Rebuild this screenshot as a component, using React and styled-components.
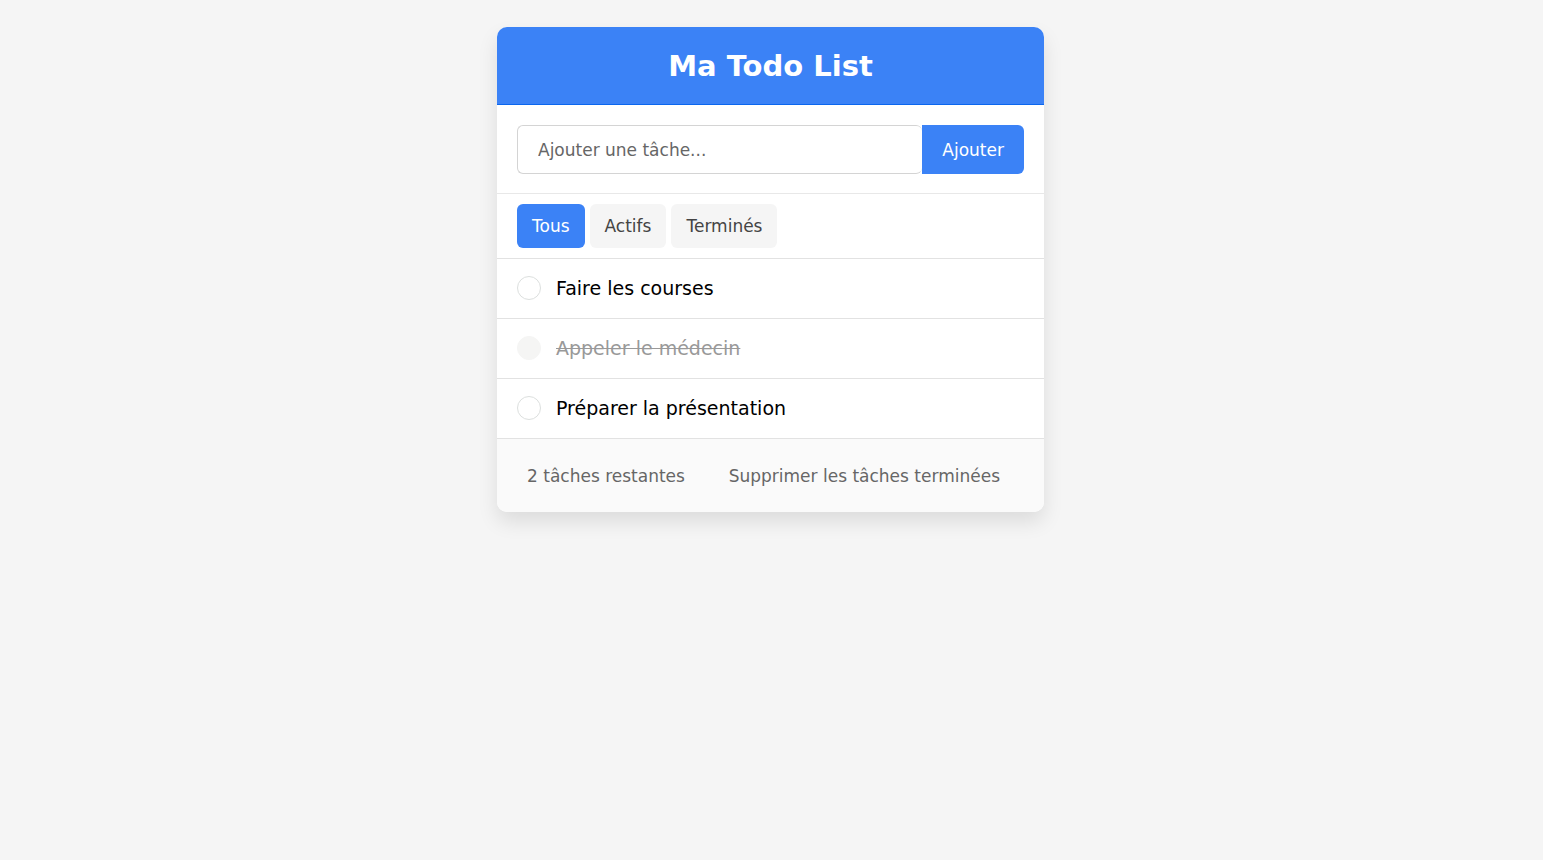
import React, { useState } from "react";
import styled, { createGlobalStyle } from "styled-components";

const GlobalStyle = createGlobalStyle`
  *, *::before, *::after { box-sizing: border-box; }
  body {
    margin: 0;
    background: #f5f5f5;
    font-family: "DejaVu Sans", Verdana, sans-serif;
    color: #000;
  }
  button, input { font-family: inherit; }
`;

const Page = styled.main`
  display: flex;
  justify-content: center;
  padding: 27px 22px 27px 20px;
`;

const Card = styled.section`
  width: 100%;
  max-width: 547px;
  overflow: hidden;
  border-radius: 10px;
  background: #fff;
  box-shadow: 0 10px 20px rgba(0, 0, 0, 0.1);
`;

const Header = styled.header`
  padding: 21px 20px 19px;
  background: #3b82f6;
  border-bottom: 1px solid #0b66ee;
  text-align: center;
`;

const Title = styled.h1`
  margin: 0;
  color: #fff;
  font-size: 29px;
  line-height: 37px;
`;

const AddForm = styled.form`
  display: flex;
  padding: 20px 20px 19px;
  border-bottom: 1px solid #e8e8e8;
`;

const TaskInput = styled.input`
  flex: 1;
  min-width: 0;
  height: 49px;
  padding: 0 20px;
  border: 1px solid #d4d4d4;
  border-right: 0;
  border-radius: 6px;
  background: #fff;
  font-size: 17px;
  outline: none;
  &::placeholder { color: #666; opacity: 1; }
`;

const AddButton = styled.button`
  height: 49px;
  padding: 0 20px;
  border: 0;
  border-radius: 0 6px 6px 0;
  background: #3b82f6;
  color: #fff;
  font-size: 17px;
  cursor: pointer;
`;

const Filters = styled.nav`
  display: flex;
  gap: 5px;
  padding: 10px 20px;
  border-bottom: 1px solid #e2e2e2;
`;

const FilterButton = styled.button`
  height: 44px;
  padding: 0 15px;
  border: 0;
  border-radius: 6px;
  background: ${({ $active }) => ($active ? "#3b82f6" : "#f5f5f5")};
  color: ${({ $active }) => ($active ? "#fff" : "#444")};
  font-size: 17px;
  cursor: pointer;
`;

const TaskList = styled.ul`
  margin: 0;
  padding: 0;
  list-style: none;
`;

const TaskRow = styled.li`
  border-bottom: 1px solid #e2e2e2;
`;

const TaskLabel = styled.label`
  display: flex;
  align-items: center;
  gap: 15px;
  height: 59px;
  padding: 0 20px 2px;
  cursor: pointer;
`;

const Check = styled.input`
  appearance: none;
  flex: none;
  width: 24px;
  height: 24px;
  margin: 0;
  border: 1px solid #dcdfde;
  border-radius: 50%;
  background: #fff;
  cursor: pointer;
  &:checked {
    border-color: #f5f5f4;
    background: #f5f5f4;
  }
`;

const TaskText = styled.span`
  font-size: 19px;
  line-height: 24px;
  color: ${({ $done }) => ($done ? "#999" : "#000")};
  text-decoration: ${({ $done }) => ($done ? "line-through" : "none")};
`;

const Footer = styled.footer`
  display: flex;
  align-items: center;
  justify-content: space-between;
  height: 73px;
  padding: 0 44px 0 30px;
  background: #fafafa;
  color: #666;
  font-size: 17px;
`;

const ClearButton = styled.button`
  padding: 0;
  border: 0;
  background: none;
  color: inherit;
  font-size: 17px;
  cursor: pointer;
`;

const FILTERS = ["Tous", "Actifs", "Terminés"];

const INITIAL_TASKS = [
  { id: 1, text: "Faire les courses", done: false },
  { id: 2, text: "Appeler le médecin", done: true },
  { id: 3, text: "Préparer la présentation", done: false },
];

export default function App() {
  const [tasks, setTasks] = useState(INITIAL_TASKS);
  const [filter, setFilter] = useState("Tous");
  const [draft, setDraft] = useState("");

  const addTask = (event) => {
    event.preventDefault();
    const text = draft.trim();
    if (!text) return;
    setTasks([...tasks, { id: Date.now(), text, done: false }]);
    setDraft("");
  };

  const toggle = (id) =>
    setTasks(tasks.map((t) => (t.id === id ? { ...t, done: !t.done } : t)));

  const visible = tasks.filter(
    (t) => filter === "Tous" || (filter === "Terminés") === t.done
  );
  const remaining = tasks.filter((t) => !t.done).length;

  return (
    <>
      <GlobalStyle />
      <Page>
        <Card>
          <Header>
            <Title>Ma Todo List</Title>
          </Header>
          <AddForm onSubmit={addTask}>
            <TaskInput
              type="text"
              aria-label="Ajouter une tâche"
              placeholder="Ajouter une tâche..."
              value={draft}
              onChange={(e) => setDraft(e.target.value)}
            />
            <AddButton type="submit">Ajouter</AddButton>
          </AddForm>
          <Filters>
            {FILTERS.map((name) => (
              <FilterButton
                key={name}
                type="button"
                $active={filter === name}
                aria-pressed={filter === name}
                onClick={() => setFilter(name)}
              >
                {name}
              </FilterButton>
            ))}
          </Filters>
          <TaskList>
            {visible.map((task) => (
              <TaskRow key={task.id}>
                <TaskLabel>
                  <Check
                    type="checkbox"
                    checked={task.done}
                    onChange={() => toggle(task.id)}
                  />
                  <TaskText $done={task.done}>{task.text}</TaskText>
                </TaskLabel>
              </TaskRow>
            ))}
          </TaskList>
          <Footer>
            <span>{remaining} tâches restantes</span>
            <ClearButton
              type="button"
              onClick={() => setTasks(tasks.filter((t) => !t.done))}
            >
              Supprimer les tâches terminées
            </ClearButton>
          </Footer>
        </Card>
      </Page>
    </>
  );
}
